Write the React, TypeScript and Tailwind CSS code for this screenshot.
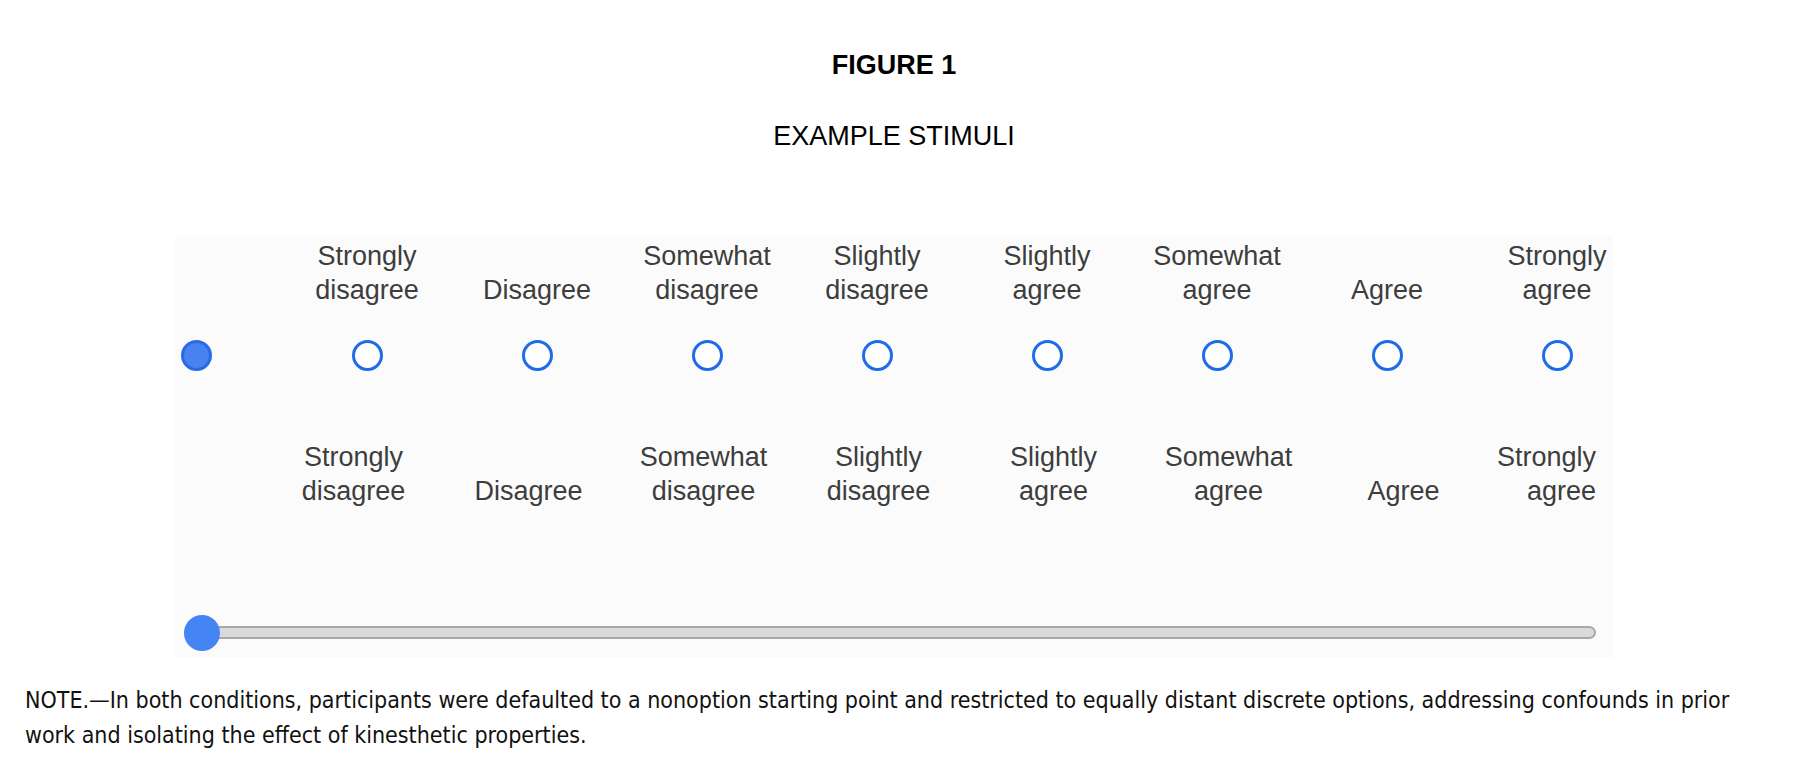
const topLabels = [
  ['Strongly', 'disagree'],
  ['Disagree'],
  ['Somewhat', 'disagree'],
  ['Slightly', 'disagree'],
  ['Slightly', 'agree'],
  ['Somewhat', 'agree'],
  ['Agree'],
  ['Strongly', 'agree'],
];

function Label({ lines }: { lines: string[] }) {
  return (
    <div className="flex flex-col">
      {lines.map((l) => (
        <span key={l}>{l}</span>
      ))}
    </div>
  );
}

export default function App() {
  return (
    <div className="w-[1812px] h-[781px] bg-white font-['Liberation_Sans',Arial,sans-serif] text-black">
      <div className="flex flex-col items-center pr-[24px]">
        <h1 className="mt-[50px] text-[27px] leading-[30px] font-bold">FIGURE 1</h1>
        <h2 className="mt-[41px] text-[27px] leading-[30px]">EXAMPLE STIMULI</h2>
      </div>

      <div className="mt-[84px] ml-[175px] w-[1438px] h-[423px] bg-[#fbfbfb] pt-[4px] text-[27px] leading-[34px] text-[#3d3d3d]">
        {/* radio version */}
        <div className="flex items-end pl-[107px]">
          {topLabels.map((lines, i) => (
            <div key={i} className="w-[170px] shrink-0 text-center">
              <Label lines={lines} />
            </div>
          ))}
        </div>
        <div className="flex items-center mt-[33px]">
          <div className="w-[42px] shrink-0 flex justify-center">
            <div className="w-[31px] h-[31px] rounded-full bg-[#4683f0] border-[3px] border-[#2b69e6]" />
          </div>
          <div className="flex shrink-0 ml-[65px]">
            {topLabels.map((_, i) => (
              <div key={i} className="w-[170px] shrink-0 flex justify-center">
                <div className="w-[31px] h-[31px] rounded-full border-[3px] border-[#1f6ce8] bg-white" />
              </div>
            ))}
          </div>
        </div>

        {/* slider version */}
        <div className="flex items-end pl-[91px] mt-[69px]">
          {topLabels.slice(0, 7).map((lines, i) => (
            <div key={i} className="w-[175px] shrink-0 text-center">
              <Label lines={lines} />
            </div>
          ))}
          <div className="w-[105px] shrink-0 text-right">
            <Label lines={topLabels[7]} />
          </div>
        </div>
        <div className="relative mt-[118px] ml-[9px] w-[1412px] h-[13px] rounded-full bg-[#dadada] border-2 border-[#a8a8a8]">
          <div className="absolute left-[-2px] top-[-13px] w-[36px] h-[36px] rounded-full bg-[#4584f3]" />
        </div>
      </div>

      <p className="mt-[25px] px-[25px] text-[23px] leading-[35px] text-[#111] font-['Liberation_Sans_Narrow','DejaVu_Sans_Condensed',sans-serif]">
        NOTE.—In both conditions, participants were defaulted to a nonoption starting point and restricted to equally distant discrete options, addressing confounds in prior
        <br />
        work and isolating the effect of kinesthetic properties.
      </p>
    </div>
  );
}
